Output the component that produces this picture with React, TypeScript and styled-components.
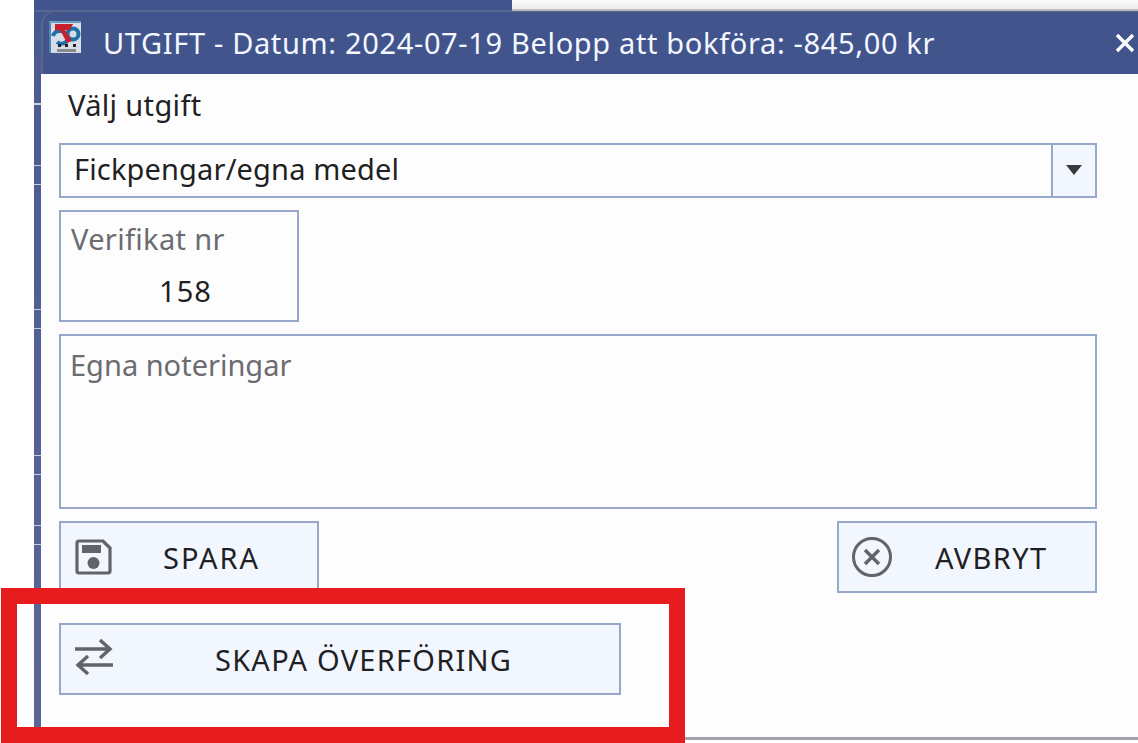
import React from "react";
import styled, { createGlobalStyle } from "styled-components";

const Global = createGlobalStyle`
  html, body { margin: 0; padding: 0; background: #fff; overflow: hidden; }
  * { box-sizing: border-box; }
`;

const Page = styled.div`
  position: relative;
  width: 1138px;
  height: 743px;
  overflow: hidden;
  background: #fff;
  padding-left: 34px;
  font-family: "Noto Sans", "Open Sans", "Liberation Sans", sans-serif;
  color: #1f1f24;
`;

const Backdrop = styled.div`
  position: relative;
  width: 1104px;
  height: 740px;
  display: flex;
  flex-direction: column;
  background: linear-gradient(#41558c, #4b5b92 8%, #5a6699);
  border-bottom: 3px solid #a2a4ac;
`;

const TopEdge = styled.div`
  height: 12px;
  flex: none;
  display: flex;
  flex-direction: column;
  justify-content: flex-end;
  background: #41558c;
  &::before {
    content: "";
    height: 2px;
    background: #59668f;
  }
`;

const TopPaper = styled.div`
  position: absolute;
  left: 478px;
  right: 0;
  top: 0;
  height: 12px;
  background: linear-gradient(#fafafa, #ebebeb 75%, #b5b5b5 80%);
`;

const Ticks = styled.div<{ $top: number; $height: number }>`
  position: absolute;
  left: 0;
  top: ${(p) => p.$top}px;
  width: 7px;
  height: ${(p) => p.$height}px;
  border-top: 1px solid #c9cedf;
  border-bottom: 1px solid #c9cedf;
`;

const Dialog = styled.div`
  position: relative;
  flex: 1;
  margin-left: 7px;
  display: flex;
  flex-direction: column;
  margin-top: -1px;
`;

const TitleBar = styled.div`
  height: 63px;
  flex: none;
  display: flex;
  align-items: center;
  background: #41558c;
  border-radius: 14px 0 0 0;
  border-top: 1px solid #59668f;
  border-left: 2px solid #59668f;
  color: #fff;
  padding: 0 0 0 6px;
`;

const Logo = styled.svg`
  width: 32px;
  height: 32px;
  flex: none;
  margin: -12px 22px 0 0;
`;

const Title = styled.div`
  font-size: 29px;
  letter-spacing: 0.65px;
  white-space: nowrap;
  flex: 1;
  color: #f4f7ff;
  padding-bottom: 2px;
`;

const Close = styled.svg`
  width: 20px;
  height: 20px;
  flex: none;
  margin-right: 3px;
`;

const Body = styled.div`
  flex: 1;
  display: flex;
  flex-direction: column;
  padding: 0 41px 0 18px;
  background: #fdfdfd;
`;

const Heading = styled.div`
  font-size: 29px;
  letter-spacing: 0.35px;
  line-height: 38px;
  margin: 12px 0 0 9px;
  height: 39px;
`;

const Select = styled.div`
  height: 55px;
  margin-top: 18px;
  display: flex;
  border: 2px solid #97a8ca;
  background: #fdfdfd;
`;

const SelectValue = styled.div`
  flex: 1;
  font-size: 29px;
  letter-spacing: 0.15px;
  line-height: 47px;
  padding-left: 13px;
`;

const SelectArrow = styled.div`
  width: 44px;
  display: flex;
  align-items: center;
  justify-content: center;
  border-left: 2px solid #97a8ca;
  background: #f2f6fe;
  padding-bottom: 2px;
`;

const Arrow = styled.svg`
  width: 18px;
  height: 12px;
`;

const NumberBox = styled.div`
  width: 240px;
  height: 112px;
  margin-top: 12px;
  border: 2px solid #97a8ca;
  display: flex;
  flex-direction: column;
`;

const FieldLabel = styled.div`
  font-size: 29px;
  letter-spacing: 0.33px;
  line-height: 38px;
  color: #6b6b72;
  padding: 8px 0 0 10px;
`;

const FieldValue = styled.div`
  font-size: 29px;
  letter-spacing: 1px;
  line-height: 38px;
  text-align: center;
  margin-top: 14px;
  padding-left: 13px;
`;

const Notes = styled.div`
  height: 175px;
  margin-top: 12px;
  border: 2px solid #97a8ca;
  font-size: 29px;
  line-height: 38px;
  color: #6b6b72;
  padding: 10px 0 0 9px;
`;

const Actions = styled.div`
  display: flex;
  justify-content: space-between;
  margin-top: 12px;
`;

const ActionButton = styled.div<{ $width: number; $textLeft: number; $spacing: number }>`
  width: ${(p) => p.$width}px;
  height: 72px;
  display: flex;
  align-items: center;
  flex: none;
  border: 2px solid #97a8ca;
  background: #f2f6fe;
  padding-left: 12px;
  font-size: 29px;
  letter-spacing: ${(p) => p.$spacing}px;
  & > span { margin-left: ${(p) => p.$textLeft}px; }
`;

const Icon = styled.svg`
  width: 42px;
  height: 42px;
  flex: none;
  color: #616468;
`;

const TransferRow = styled.div`
  margin-top: 30px;
`;

const Highlight = styled.div`
  position: absolute;
  left: 1px;
  top: 588px;
  width: 684px;
  height: 155px;
  border: 16px solid #e71c1f;
  pointer-events: none;
`;

const App: React.FC = () => (
  <>
    <Global />
    <Page>
      <Backdrop>
        <TopEdge />
        <TopPaper />
        <Ticks $top={103} $height={1} />
        <Ticks $top={165} $height={20} />
        <Ticks $top={309} $height={20} />
        <Ticks $top={455} $height={20} />
        <Ticks $top={525} $height={20} />
        <Dialog>
          <TitleBar>
            <Logo viewBox="0 0 32 32">
              <rect width="32" height="32" fill="#d7dde6" />
              <rect x="0" y="0" width="2" height="32" fill="#4d84b0" />
              <rect x="0" y="0" width="32" height="2" fill="#6aa0c4" />
              <path d="M4 15a7 6 0 0 1 7-5h4M18 20a7 7 0 0 1-10 1" fill="none" stroke="#1d6fa8" strokeWidth="4" />
              <circle cx="24" cy="13" r="5.5" fill="none" stroke="#1d6fa8" strokeWidth="4" />
              <path d="M6 3h18l-3 6h-5l7 11-5 2-7-13-5 1z" fill="#c8202c" />
              <rect x="9" y="23" width="3" height="3" fill="#222" />
              <rect x="16" y="23" width="3" height="3" fill="#222" />
              <rect x="24" y="23" width="3" height="3" fill="#222" />
              <rect x="8" y="28" width="19" height="3" fill="#8a8a8a" />
            </Logo>
            <Title>UTGIFT - Datum: 2024-07-19 Belopp att bokföra: -845,00 kr</Title>
            <Close viewBox="0 0 20 20">
              <path d="M2 2l16 16M18 2L2 18" stroke="#fff" strokeWidth="3.4" fill="none" />
            </Close>
          </TitleBar>
          <Body>
            <Heading>Välj utgift</Heading>
            <Select>
              <SelectValue>Fickpengar/egna medel</SelectValue>
              <SelectArrow>
                <Arrow viewBox="0 0 18 12">
                  <path d="M1 1h16l-8 10z" fill="#3a3a3c" />
                </Arrow>
              </SelectArrow>
            </Select>
            <NumberBox>
              <FieldLabel>Verifikat nr</FieldLabel>
              <FieldValue>158</FieldValue>
            </NumberBox>
            <Notes>Egna noteringar</Notes>
            <Actions>
              <ActionButton $width={260} $textLeft={48} $spacing={2}>
                <Icon viewBox="0 0 42 42">
                  <path d="M6 5h24l7 7v23a2 2 0 0 1-2 2H6a2 2 0 0 1-2-2V7a2 2 0 0 1 2-2z" fill="none" stroke="currentColor" strokeWidth="3.2" />
                  <rect x="9" y="9" width="19" height="8" fill="currentColor" />
                  <circle cx="20.5" cy="27" r="6" fill="currentColor" />
                </Icon>
                <span>SPARA</span>
              </ActionButton>
              <ActionButton $width={260} $textLeft={42} $spacing={1.4}>
                <Icon viewBox="0 0 42 42">
                  <circle cx="21" cy="21" r="18.5" fill="none" stroke="currentColor" strokeWidth="3" />
                  <path d="M14 14l14 14M28 14L14 28" stroke="currentColor" strokeWidth="3.4" fill="none" />
                </Icon>
                <span>AVBRYT</span>
              </ActionButton>
            </Actions>
            <TransferRow>
              <ActionButton $width={562} $textLeft={100} $spacing={1.25}>
                <Icon viewBox="0 0 42 42">
                  <path d="M2 11h36M27 2l10 9-10 9M40 27H4M15 18L5 27l10 9" fill="none" stroke="currentColor" strokeWidth="3.4" />
                </Icon>
                <span>SKAPA ÖVERFÖRING</span>
              </ActionButton>
            </TransferRow>
          </Body>
        </Dialog>
      </Backdrop>
      <Highlight />
    </Page>
  </>
);

export default App;
